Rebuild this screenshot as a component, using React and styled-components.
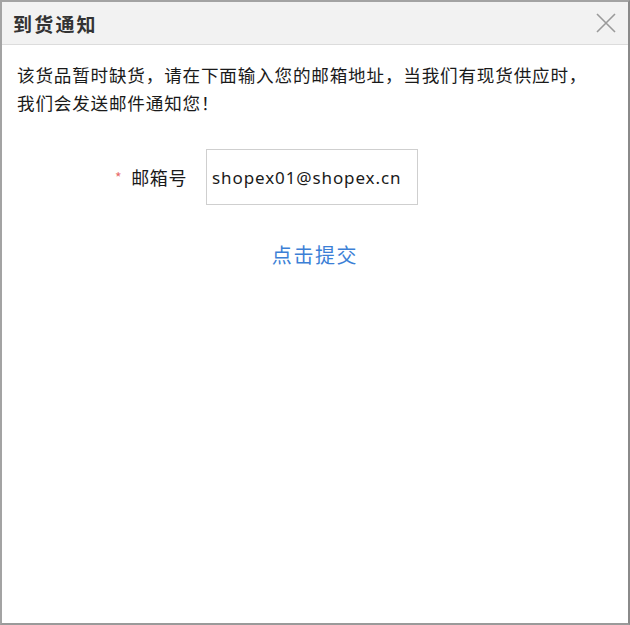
import styled, { createGlobalStyle } from 'styled-components'

const GlobalStyle = createGlobalStyle`
  html, body {
    margin: 0;
    padding: 0;
    background: #fff;
  }
  body {
    font-family: "Noto Sans CJK SC", "Noto Sans", sans-serif;
  }
`

const Dialog = styled.div`
  box-sizing: border-box;
  width: 630px;
  height: 625px;
  border: 2px solid #a3a3a3;
  border-right-color: #8a8a8a;
  border-bottom-color: #9a9a9a;
  background: #fff;
  display: flex;
  flex-direction: column;
`

const Header = styled.div`
  height: 42px;
  background: #f2f2f2;
  border-bottom: 1px solid #dcdcdc;
  display: flex;
  align-items: center;
  justify-content: space-between;
  padding: 0 10px 0 11px;
`

const Title = styled.h3`
  margin: 0;
  font-size: 19px;
  font-weight: bold;
  letter-spacing: 2.2px;
  color: #333;
`

const CloseButton = styled.button`
  border: 0;
  background: none;
  padding: 0;
  width: 24px;
  height: 24px;
  display: flex;
  align-items: center;
  justify-content: center;
  cursor: pointer;
`

const Body = styled.div`
  padding: 16px 15px;
`

const Message = styled.p`
  margin: 0;
  font-size: 17.6px;
  line-height: 28px;
  letter-spacing: 0.8px;
  color: #1a1a1a;
`

const FormRow = styled.div`
  display: flex;
  align-items: center;
  margin-top: 32px;
`

const Label = styled.label`
  width: 170px;
  text-align: right;
  font-size: 18px;
  letter-spacing: 0.6px;
  color: #1a1a1a;
  padding-right: 19px;
`

const Required = styled.span`
  color: #e86b6b;
  font-size: 14px;
  margin-right: 9px;
  vertical-align: 2px;
`

const EmailInput = styled.input`
  box-sizing: border-box;
  width: 212px;
  height: 56px;
  border: 1px solid #cfcfcf;
  padding: 0 5px;
  font-family: "Noto Sans", sans-serif;
  font-size: 17px;
  letter-spacing: 0.9px;
  color: #1a1a1a;
  outline: none;
`

const SubmitLink = styled.a`
  display: block;
  margin-top: 36px;
  text-align: center;
  font-size: 20px;
  letter-spacing: 1.6px;
  line-height: 28px;
  color: #3c7fd6;
  text-decoration: none;
  cursor: pointer;
`

export default function App() {
  return (
    <>
      <GlobalStyle />
      <Dialog>
        <Header>
          <Title>到货通知</Title>
          <CloseButton aria-label='close'>
            <svg width='20' height='20' viewBox='0 0 20 20'>
              <path d='M1 1 L19 19 M19 1 L1 19' stroke='#9a9a9a' strokeWidth='1.6' />
            </svg>
          </CloseButton>
        </Header>
        <Body>
          <Message>
            该货品暂时缺货，请在下面输入您的邮箱地址，当我们有现货供应时，
            <br />
            我们会发送邮件通知您！
          </Message>
          <FormRow>
            <Label htmlFor='email'>
              <Required>*</Required>邮箱号
            </Label>
            <EmailInput id='email' type='text' defaultValue='shopex01@shopex.cn' />
          </FormRow>
          <SubmitLink>点击提交</SubmitLink>
        </Body>
      </Dialog>
    </>
  )
}
